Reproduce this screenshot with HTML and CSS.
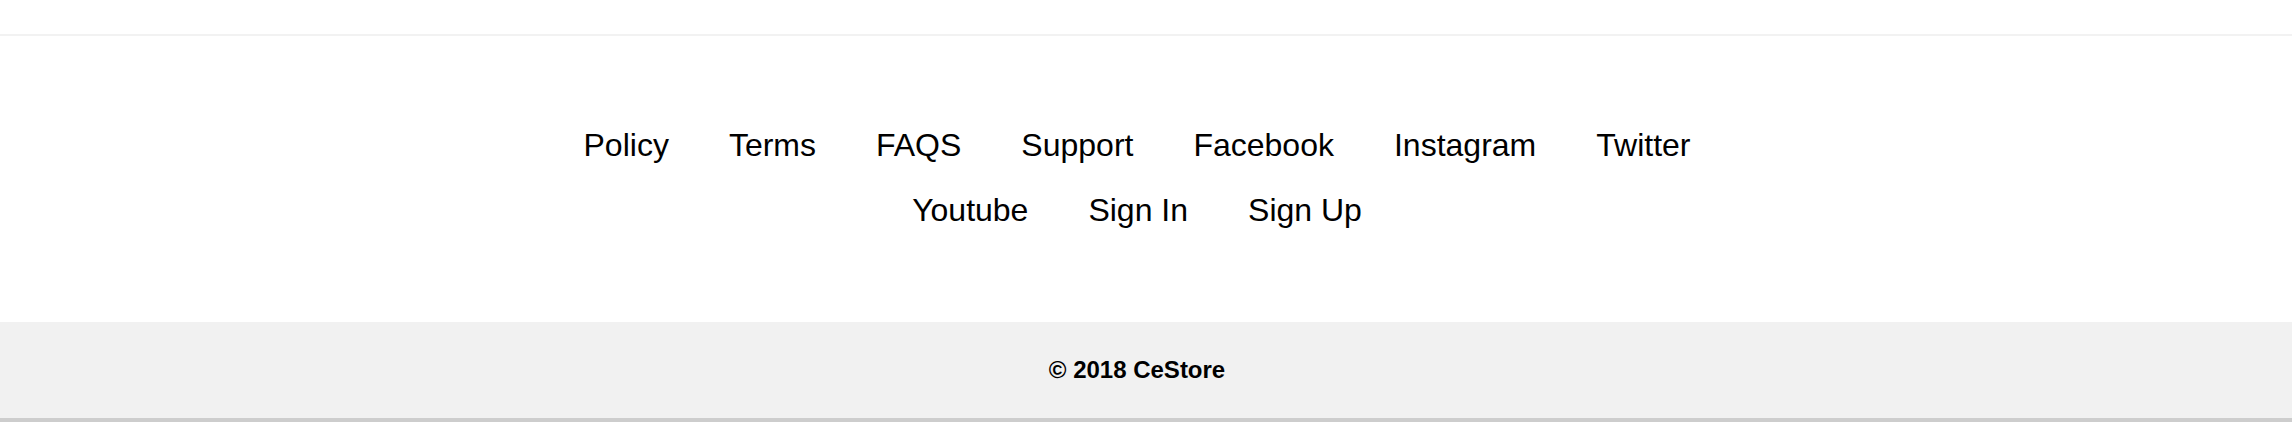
FILE: index.html
```html
<!DOCTYPE html>
<html lang="en">
<head>
<meta charset="utf-8">
<title>CeStore</title>
<link rel="stylesheet" href="styles.css">
</head>
<body>
<div class="page-top"></div>
<footer class="site-footer">
  <nav class="footer-nav">
    <ul class="footer-links">
      <li><a href="#">Policy</a></li>
      <li><a href="#">Terms</a></li>
      <li><a href="#">FAQS</a></li>
      <li><a href="#">Support</a></li>
      <li><a href="#">Facebook</a></li>
      <li><a href="#">Instagram</a></li>
      <li><a href="#">Twitter</a></li>
      <li><a href="#">Youtube</a></li>
      <li><a href="#">Sign In</a></li>
      <li><a href="#">Sign Up</a></li>
    </ul>
  </nav>
  <div class="copyright">
    <p>© 2018 CeStore</p>
  </div>
</footer>
</body>
</html>
```
FILE: styles.css
```css
* { box-sizing: border-box; }
html, body {
  margin: 0;
  padding: 0;
  background: #fff;
  font-family: "Liberation Sans", Arial, Helvetica, sans-serif;
  color: #000;
}
.page-top {
  height: 34px;
}
.site-footer {
  border-top: 2px solid #f2f2f2;
}
.footer-nav {
  padding: 92px 18px 95px 0;
}
.footer-links {
  list-style: none;
  margin: 0 auto;
  padding: 0;
  max-width: 1182px;
  display: flex;
  flex-wrap: wrap;
  justify-content: center;
  column-gap: 60px;
  row-gap: 31px;
}
.footer-links li {
  font-size: 32px;
  line-height: 34px;
}
.footer-links a {
  color: #000;
  text-decoration: none;
}
.copyright {
  background: #f1f1f1;
  border-bottom: 4px solid #cdcdcd;
  height: 100px;
  padding: 0 18px 0 0;
  display: flex;
  align-items: center;
  justify-content: center;
}
.copyright p {
  margin: 0;
  font-size: 24px;
  font-weight: bold;
  line-height: 28px;
}
```
